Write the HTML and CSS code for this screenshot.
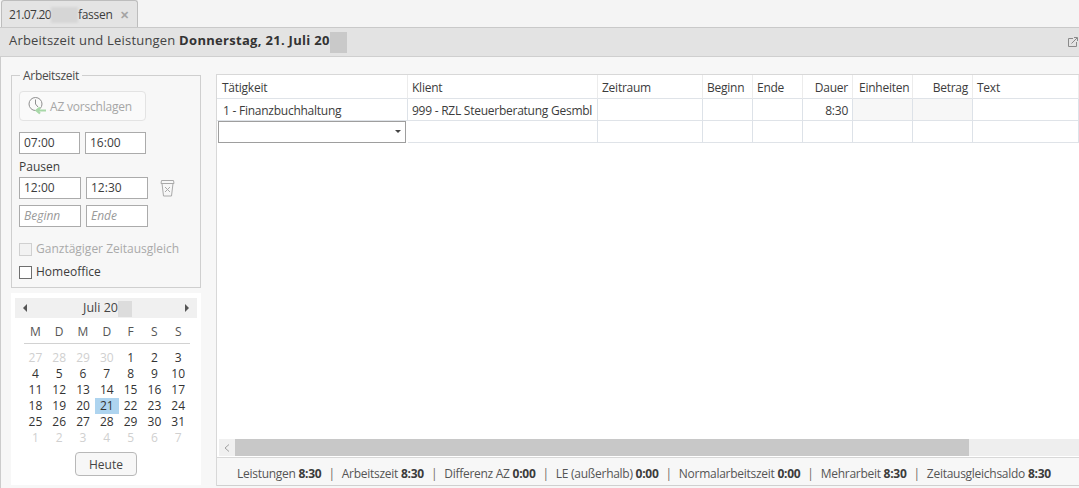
FILE: index.html
```html
<!DOCTYPE html>
<html lang="de">
<head>
<meta charset="utf-8">
<title>Arbeitszeit und Leistungen</title>
<link rel="stylesheet" href="styles.css">
</head>
<body>
<div class="app">
  <div class="tabstrip">
    <div class="tab">
      <span class="tabdate">21.07.20</span><span class="blur blur-tab"></span><span class="tabname">fassen</span>
      <span class="close">✕</span>
    </div>
  </div>
  <header class="head">
    <h1>Arbeitszeit und Leistungen <b>Donnerstag, 21. Juli 20</b><span class="blur blur-head"></span></h1>
    <svg class="ext" width="10" height="10" viewBox="0 0 10 10" fill="none" stroke="#8a8a8a"><path d="M5 1.500H.5v8h8V5"/><path d="M3.500 6.500 9 1M6 .5h3.500V4"/></svg>
  </header>
  <main class="main">
    <aside class="side">
      <fieldset class="box">
        <legend>Arbeitszeit</legend>
        <button class="suggest" type="button">
          <svg width="20" height="20" viewBox="0 0 20 20" fill="none"><circle cx="8.500" cy="8" r="6.500" stroke="#8f8f8f"/><path d="M8.500 3.500V8l2.500 3" stroke="#8f8f8f"/><path d="M19 14.500h-9M13 11.500l-3.500 3 3.500 3" stroke="#a8d8a8" stroke-width="2.200"/></svg>
          AZ vorschlagen
        </button>
        <div class="times t-main"><div class="inp">07:00</div><div class="inp">16:00</div></div>
        <div class="lbl">Pausen</div>
        <div class="times t-p">
          <div class="inp w62">12:00</div><div class="inp w62">12:30</div>
          <svg class="trash" width="15" height="18" viewBox="0 0 15 18" fill="none" stroke="#aaa"><path d="M1.500 1.500h12l.5 3H1zM2 4.500l1.500 12.500h8L13 4.500"/><path d="M5 8l5 5M10 8l-5 5"/></svg>
        </div>
        <div class="times t-p2"><div class="inp w62 ph">Beginn</div><div class="inp w62 ph">Ende</div></div>
        <label class="chk off"><span class="cb"></span>Ganztägiger Zeitausgleich</label>
        <label class="chk"><span class="cb"></span>Homeoffice</label>
      </fieldset>
      <section class="cal">
        <div class="calnav"><span class="arr l"></span><span class="month">Juli 20<span class="blur blur-cal"></span></span><span class="arr r"></span></div>
        <div class="wk"><span>M</span><span>D</span><span>M</span><span>D</span><span>F</span><span>S</span><span>S</span></div>
        <div class="days">
          <span class="o">27</span><span class="o">28</span><span class="o">29</span><span class="o">30</span><span>1</span><span>2</span><span>3</span>
          <span>4</span><span>5</span><span>6</span><span>7</span><span>8</span><span>9</span><span>10</span>
          <span>11</span><span>12</span><span>13</span><span>14</span><span>15</span><span>16</span><span>17</span>
          <span>18</span><span>19</span><span>20</span><span class="sel">21</span><span>22</span><span>23</span><span>24</span>
          <span>25</span><span>26</span><span>27</span><span>28</span><span>29</span><span>30</span><span>31</span>
          <span class="o">1</span><span class="o">2</span><span class="o">3</span><span class="o">4</span><span class="o">5</span><span class="o">6</span><span class="o">7</span>
        </div>
        <div class="today"><button type="button">Heute</button></div>
      </section>
    </aside>
    <section class="panel">
      <div class="grid">
        <div class="c h c1h">Tätigkeit</div><div class="c h">Klient</div><div class="c h">Zeitraum</div><div class="c h">Beginn</div><div class="c h">Ende</div><div class="c h r">Dauer</div><div class="c h ein">Einheiten</div><div class="c h r">Betrag</div><div class="c h">Text</div>
        <div class="c c1">1 - Finanzbuchhaltung</div><div class="c">999 - RZL Steuerberatung Gesmbl</div><div class="c"></div><div class="c"></div><div class="c"></div><div class="c r">8:30</div><div class="c gr"></div><div class="c gr"></div><div class="c"></div>
        <div class="c combo"><span class="caret"></span></div><div class="c"></div><div class="c"></div><div class="c"></div><div class="c"></div><div class="c"></div><div class="c"></div><div class="c"></div><div class="c"></div>
      </div>
      <div class="spacer"></div>
      <div class="scroll">
        <span class="sbtn"><svg width="6" height="8" viewBox="0 0 6 8" fill="none" stroke="#a0a0a0"><path d="M5 .5 1 4l4 3.500"/></svg></span>
        <span class="thumb"></span>
      </div>
      <footer class="foot">
        <span>Leistungen <b>8:30</b></span><i>|</i>
        <span>Arbeitszeit <b>8:30</b></span><i>|</i>
        <span>Differenz AZ <b>0:00</b></span><i>|</i>
        <span>LE (außerhalb) <b>0:00</b></span><i>|</i>
        <span>Normalarbeitszeit <b>0:00</b></span><i>|</i>
        <span>Mehrarbeit <b>8:30</b></span><i>|</i>
        <span>Zeitausgleichsaldo <b>8:30</b></span>
      </footer>
    </section>
  </main>
</div>
</body>
</html>
```
FILE: styles.css
```css
* { box-sizing: border-box; }
html, body { margin: 0; height: 100%; overflow: hidden; }
body {
  font-family: "Open Sans", "Noto Sans", sans-serif;
  font-size: 12px;
  color: #3c3c3c;
  background: #f7f7f7;
}
.app { width: 1079px; height: 488px; display: flex; flex-direction: column; }

.tabstrip { height: 28px; flex: none; background: #f4f4f4; border-bottom: 1px solid #c9c9c9; padding-left: 1px; }
.tab {
  width: 137px; height: 27px;
  display: flex; align-items: center;
  padding: 1px 0 0 7px;
  background: #e4e4e4;
  border: 1px solid #bdbdbd; border-bottom: 0;
  border-radius: 3px 3px 0 0;
  font-size: 12px;
  letter-spacing: -.1px;
}
.tabdate { letter-spacing: -.7px; }
.tabname { letter-spacing: -.25px; }
.close { margin-left: 7px; font-size: 11px; font-weight: 700; color: #a4a4a4; }
.blur { display: inline-block; vertical-align: middle; }
.blur-tab { width: 27px; height: 16px; background: #d6d6d6; filter: blur(1px); }
.blur-head { width: 17px; height: 21px; background: #c9c9c9; filter: blur(.7px); }
.blur-cal { width: 14px; height: 16px; background: #dcdcdc; filter: blur(.7px); }

.head {
  height: 29px; flex: none;
  display: flex; align-items: center; justify-content: space-between;
  padding: 0 1px 0 9px;
  background: #e3e3e3;
  border-bottom: 1px solid #cfcfcf;
}
.head h1 { margin: 0; font-size: 13px; font-weight: 400; letter-spacing: .2px; color: #444; }
.head b { color: #333; letter-spacing: .3px; }

.main { flex: 1; min-height: 0; display: flex; padding: 17px 0 2px 11px; gap: 15px; border-left: 1px solid #ccc; margin: 0; }
.side { width: 190px; flex: none; display: flex; flex-direction: column; gap: 5px; margin-left: -1px; }

.box {
  margin: 0; min-width: 0; height: 221px;
  padding: 8px 7px 0;
  border: 1px solid #cfcfcf;
  display: block;
  margin-top: -7px;
}
.box legend { padding: 2px 3px 0; margin-left: 1px; color: #4a4a4a; line-height: 14px; letter-spacing: -.3px; }
.suggest {
  display: flex; align-items: center; gap: 3px;
  width: 127px; height: 30px; padding: 0 0 0 7px;
  font: inherit; font-size: 12px; letter-spacing: -.2px; color: #a6a6a6;
  background: #fafafa;
  border: 1px solid #e3e3e3; border-radius: 4px;
}
.times { display: flex; gap: 5px; }
.t-main { margin-top: 11px; }
.t-p { margin-top: 2px; align-items: center; }
.t-p2 { margin-top: 6px; }
.inp {
  width: 61px; height: 22px; padding-left: 4px;
  line-height: 20px; background: #fff;
  border: 1px solid #ababab; color: #3c3c3c;
}
.w62 { width: 62px; }
.ph { font-style: italic; color: #9a9a9a; }
.trash { margin-left: 7px; }
.lbl { margin-top: 4px; line-height: 18px; height: 17px; }
.chk { display: flex; align-items: center; gap: 4px; height: 18px; line-height: 18px; }
.chk + .chk { margin-top: 5px; }
.t-p2 + .chk { margin-top: 13px; }
.cb { width: 13px; height: 13px; background: #fff; border: 1px solid #6f6f6f; }
.off { color: #aaa; }
.off .cb { background: #f2f2f2; border-color: #d0d0d0; }

.cal { height: 192px; background: #fff; padding: 5px 4px 0; }
.calnav { height: 20px; display: flex; align-items: center; justify-content: space-between; padding: 0 4px 0 8px; background: #f0f0f0; }
.month { color: #444; font-size: 12.5px; margin-left: 3px; }
.arr { width: 0; height: 0; border-top: 4px solid transparent; border-bottom: 4px solid transparent; }
.arr.l { border-right: 4px solid #555; }
.arr.r { border-left: 4px solid #555; }
.wk {
  display: grid; grid-template-columns: repeat(7, 23.8px);
  margin: 4px 0 0 8.5px; width: 166px; height: 22px;
  line-height: 19px; text-align: center; color: #555;
  border-bottom: 1px solid #d2d2d2;
}
.days {
  display: grid; grid-template-columns: repeat(7, 23.8px); grid-auto-rows: 16px;
  margin: 6px 0 0 8.5px; line-height: 16px; text-align: center; color: #333;
}
.o { color: #d0d0d0; }
.sel { background: #aed4ef; }
.today { display: flex; justify-content: center; margin-top: 6px; padding-right: 0; }
.today button {
  width: 62px; height: 24px; font: inherit; font-size: 12px; color: #444;
  background: #f7f7f7; border: 1px solid #b8b8b8; border-radius: 4px; padding: 0;
}

.panel { flex: 1; min-width: 0; display: flex; flex-direction: column; border: 1px solid #d8d8d8; border-right: 0; border-bottom: 0; background: #fff; }
.grid {
  display: grid;
  grid-template-columns: 191px 190px 105px 50px 50px 50px 60px 60px 1fr;
  grid-template-rows: 24px 22px 22px;
  flex: none;
}
.c {
  padding: 0 4px; line-height: 23px; white-space: nowrap; overflow: hidden; letter-spacing: -.25px;
  border-right: 1px solid #dde2e8; border-bottom: 1px solid #dfe3e8; color: #3c3c3c;
}
.h { border-right-color: #ececec; line-height: 25px; }
.c1h { padding-left: 5px; }
.c1 { padding-left: 6px; }
.ein { padding-left: 6px; }
.r { text-align: right; padding-right: 4px; }
.gr { background: #f7f7f7; }
.combo { position: relative; margin: 0 2px 0 1px; border: 1px solid #9e9e9e; }
.caret { position: absolute; right: 4px; top: 8px; width: 0; height: 0; border-left: 3px solid transparent; border-right: 3px solid transparent; border-top: 3px solid #444; }
.spacer { flex: 1; }
.scroll { height: 17px; flex: none; display: flex; background: #eee; margin-left: 2px; }
.sbtn { width: 16px; display: flex; align-items: center; justify-content: center; background: #f0f0f0; }
.thumb { width: 734px; background: #c8c8c8; }
.foot {
  height: 29px; flex: none; display: flex; align-items: center; gap: 7px;
  padding: 3px 0 0 20px; margin-top: 1px;
  background: #f7f7f7; border-top: 1px solid #d8d8d8; border-bottom: 1px solid #d0d0d0;
  color: #555; white-space: nowrap; letter-spacing: -.27px;
}
.foot b { color: #3c3c3c; }
.foot i { font-style: normal; color: #6f6a62; }
```
